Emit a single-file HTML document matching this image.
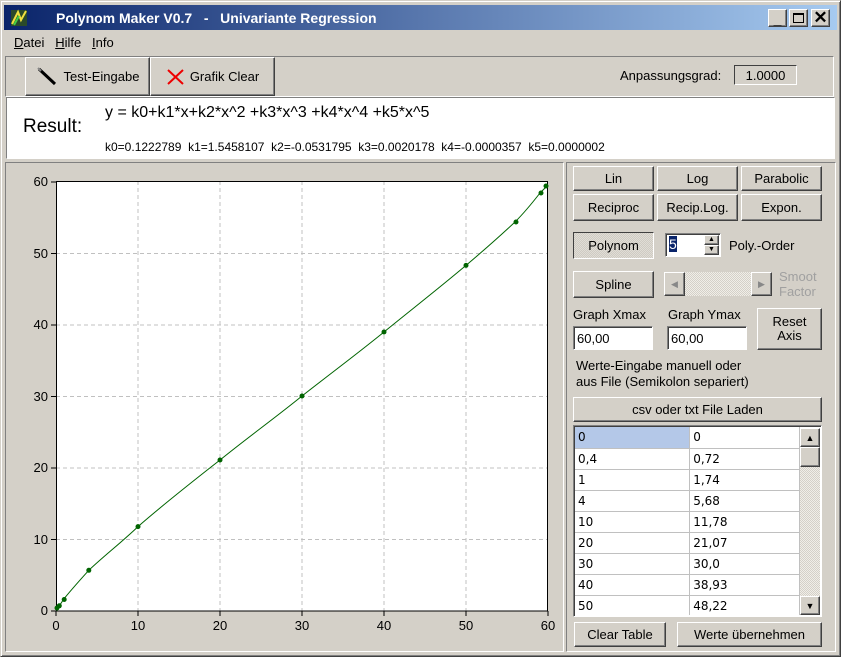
<!DOCTYPE html>
<html><head><meta charset="utf-8"><style>
*{margin:0;padding:0;box-sizing:border-box}
body{width:841px;height:657px;background:#d4d0c8;font-family:"Liberation Sans",sans-serif;font-size:12px;position:relative;overflow:hidden;color:#000}
.a{position:absolute}
.btn{position:absolute;background:#d4d0c8;border:1px solid;border-color:#fff #404040 #404040 #fff;box-shadow:inset -1px -1px 0 #808080;display:flex;align-items:center;justify-content:center;font-size:13px;text-align:center;line-height:14px}
.sunk{position:absolute;border:1px solid;border-color:#808080 #fff #fff #808080;box-shadow:inset 1px 1px 0 #404040}
.inp{position:absolute;background:#fff;border:1px solid;border-color:#808080 #fff #fff #808080;box-shadow:inset 1px 1px 0 #404040;font-size:13px;padding:4px 3px}
.tw{position:absolute;left:575px;top:427px;width:225px;height:188px;overflow:hidden;background:#fff}
table{border-collapse:collapse}
td{height:21px;border-right:1px solid #c0c0c0;border-bottom:1px solid #c0c0c0;background:#fff;font-family:"DejaVu Sans",sans-serif;font-size:12px;padding-left:3px;line-height:20px}
td.c1{width:115px}td.c2{width:110px}
</style></head><body>
<div class="a" style="left:0;top:0;width:841px;height:657px;border:1px solid;border-color:#d4d0c8 #404040 #404040 #d4d0c8;box-shadow:inset 1px 1px 0 #fff,inset -1px -1px 0 #808080"></div>
<div class="a" style="left:4px;top:5px;width:833px;height:25px;background:linear-gradient(to right,#0a246a,#a6caf0)"></div>
<svg class="a" style="left:9px;top:8px" width="20" height="20"><rect x="2" y="2" width="16" height="16" fill="#2a4a2a"/><path d="M3 16 L9 4 L12 12 L17 3" stroke="#f0e040" stroke-width="2" fill="none"/><path d="M5 17 L10 8" stroke="#4c4" stroke-width="2"/></svg>
<div class="a" style="left:56px;top:10px;color:#fff;font-weight:bold;font-size:14px">Polynom Maker V0.7 &nbsp; - &nbsp; Univariante Regression</div>
<div class="btn" style="left:768px;top:9px;width:19px;height:18px;font-weight:bold;font-size:14px;align-items:flex-end">_</div>
<div class="btn" style="left:789px;top:9px;width:19px;height:18px"><div style="width:11px;height:10px;border:1px solid #000;border-top-width:2px"></div></div>
<div class="btn" style="left:811px;top:9px;width:19px;height:18px;font-size:17px;font-weight:bold">✕</div>
<div class="a" style="left:14px;top:35px;font-size:13px"><u>D</u>atei &nbsp; <u>H</u>ilfe &nbsp; <u>I</u>nfo</div>
<div class="a" style="left:5px;top:56px;width:829px;height:41px;border:1px solid;border-color:#808080 #fff #fff #808080"></div>
<div class="btn" style="left:25px;top:57px;width:125px;height:39px"><svg width="24" height="20" style="margin-right:4px"><path d="M3 2 L19 17" stroke="#000" stroke-width="3"/><path d="M2 1 L5 4" stroke="#888" stroke-width="2"/></svg>Test-Eingabe</div>
<div class="btn" style="left:150px;top:57px;width:125px;height:39px"><svg width="20" height="18" style="margin-right:4px"><path d="M2 2 L17 16 M17 2 L2 16" stroke="#e00" stroke-width="2"/></svg>Grafik Clear</div>
<div class="a" style="left:620px;top:68px;font-size:13px">Anpassungsgrad:</div>
<div class="a" style="left:734px;top:65px;width:63px;height:20px;background:#d4d0c8;border:1px solid;border-color:#404040 #fff #fff #404040;font-size:13px;text-align:center;padding-top:2px">1.0000</div>
<div class="a" style="left:6px;top:97px;width:829px;height:62px;background:#fff;border:1px solid;border-color:#808080 #fff #fff #808080"></div>
<div class="a" style="left:23px;top:116px;font-size:19px">Result:</div>
<div class="a" style="left:105px;top:104px;font-size:16px">y = k0+k1*x+k2*x^2 +k3*x^3 +k4*x^4 +k5*x^5</div>
<div class="a" style="left:105px;top:140px;font-size:12px">k0=0.1222789&nbsp; k1=1.5458107&nbsp; k2=-0.0531795&nbsp; k3=0.0020178&nbsp; k4=-0.0000357&nbsp; k5=0.0000002</div>
<div class="a" style="left:5px;top:162px;width:559px;height:490px;border:1px solid;border-color:#808080 #fff #fff #808080"></div>
<div class="a" style="left:566px;top:162px;width:270px;height:490px;border:1px solid;border-color:#808080 #fff #fff #808080"></div>
<svg class="a" style="left:0;top:0" width="565" height="657" font-family="Liberation Sans" font-size="13">
<rect x="56" y="181" width="492" height="430" fill="#fff"/>
<g stroke="#c0c0c0" stroke-dasharray="4,3">
<line x1="138" y1="181" x2="138" y2="611"/><line x1="220" y1="181" x2="220" y2="611"/><line x1="302" y1="181" x2="302" y2="611"/><line x1="384" y1="181" x2="384" y2="611"/><line x1="466" y1="181" x2="466" y2="611"/>
<line x1="56" y1="539.5" x2="548" y2="539.5"/><line x1="56" y1="468" x2="548" y2="468"/><line x1="56" y1="396.5" x2="548" y2="396.5"/><line x1="56" y1="325" x2="548" y2="325"/><line x1="56" y1="253.5" x2="548" y2="253.5"/>
</g>
<rect x="56.5" y="181.5" width="491" height="429.5" fill="none" stroke="#000"/>
<g stroke="#000"><line x1="51" y1="182" x2="56" y2="182"/><line x1="51" y1="253.5" x2="56" y2="253.5"/><line x1="51" y1="325" x2="56" y2="325"/><line x1="51" y1="396.5" x2="56" y2="396.5"/><line x1="51" y1="468" x2="56" y2="468"/><line x1="51" y1="539.5" x2="56" y2="539.5"/><line x1="51" y1="611" x2="56" y2="611"/>
<line x1="56" y1="611" x2="56" y2="616"/><line x1="138" y1="611" x2="138" y2="616"/><line x1="220" y1="611" x2="220" y2="616"/><line x1="302" y1="611" x2="302" y2="616"/><line x1="384" y1="611" x2="384" y2="616"/><line x1="466" y1="611" x2="466" y2="616"/><line x1="548" y1="611" x2="548" y2="616"/></g>
<g text-anchor="end"><text x="48" y="186">60</text><text x="48" y="258">50</text><text x="48" y="329">40</text><text x="48" y="401">30</text><text x="48" y="472">20</text><text x="48" y="544">10</text><text x="48" y="615">0</text></g>
<g text-anchor="middle"><text x="56" y="630">0</text><text x="138" y="630">10</text><text x="220" y="630">20</text><text x="302" y="630">30</text><text x="384" y="630">40</text><text x="466" y="630">50</text><text x="548" y="630">60</text></g>
<path d="M56 610 L59.3 605.8 L64.2 598.5 C72 589 80 580 88.8 570.3 C105 555 122 542 138 526.6 C165 503 192 482 220 460 C247 438 275 418 302 396 C330 374 357 354 384 332 C411 310 438 289 466 265.4 C483 251 499 237 515 222 C525 212 533 202 540 193 L548 185" fill="none" stroke="#006400"/>
<g fill="#006400"><circle cx="57" cy="608" r="2.5"/><circle cx="59.3" cy="605.8" r="2.5"/><circle cx="64.2" cy="599.5" r="2.5"/><circle cx="88.8" cy="570.3" r="2.5"/><circle cx="138" cy="526.6" r="2.5"/><circle cx="220" cy="460" r="2.5"/><circle cx="302" cy="396" r="2.5"/><circle cx="384" cy="332" r="2.5"/><circle cx="466" cy="265.4" r="2.5"/><circle cx="516" cy="222" r="2.5"/><circle cx="541" cy="193" r="2.5"/><circle cx="546" cy="186" r="2.5"/></g>
</svg>
<div class="btn" style="left:573px;top:166px;width:81px;height:25px">Lin</div>
<div class="btn" style="left:657px;top:166px;width:81px;height:25px">Log</div>
<div class="btn" style="left:741px;top:166px;width:81px;height:25px">Parabolic</div>
<div class="btn" style="left:573px;top:194px;width:81px;height:27px">Reciproc</div>
<div class="btn" style="left:657px;top:194px;width:81px;height:27px">Recip.Log.</div>
<div class="btn" style="left:741px;top:194px;width:81px;height:27px">Expon.</div>
<div class="a" style="left:573px;top:232px;width:81px;height:27px;border:1px solid;border-color:#404040 #fff #fff #404040;background:repeating-conic-gradient(#e0ddd6 0 25%,#cfcbc3 0 50%) 0 0/2px 2px;display:flex;align-items:center;justify-content:center;font-size:13px">Polynom</div>
<div class="inp" style="left:665px;top:233px;width:56px;height:24px;padding:2px 3px"><span style="background:#0a246a;color:#fff;font-size:14px">5</span></div>
<div class="btn" style="left:704px;top:235px;width:15px;height:10px;font-size:7px">▲</div>
<div class="btn" style="left:704px;top:245px;width:15px;height:10px;font-size:7px">▼</div>
<div class="a" style="left:729px;top:238px;font-size:13px">Poly.-Order</div>
<div class="btn" style="left:573px;top:271px;width:81px;height:27px">Spline</div>
<div class="a" style="left:664px;top:272px;width:108px;height:24px;background:repeating-conic-gradient(#f0eee8 0 25%,#d4d0c8 0 50%) 0 0/2px 2px"></div>
<div class="btn" style="left:664px;top:272px;width:21px;height:24px;color:#888;font-size:9px">◀</div>
<div class="btn" style="left:751px;top:272px;width:21px;height:24px;color:#888;font-size:9px">▶</div>
<div class="a" style="left:779px;top:269px;color:#a0a0a0;font-size:13px;line-height:15px">Smoot<br>Factor</div>
<div class="a" style="left:573px;top:307px;font-size:13px">Graph Xmax</div>
<div class="a" style="left:668px;top:307px;font-size:13px">Graph Ymax</div>
<div class="inp" style="left:573px;top:326px;width:80px;height:24px">60,00</div>
<div class="inp" style="left:667px;top:326px;width:80px;height:24px">60,00</div>
<div class="btn" style="left:757px;top:308px;width:65px;height:42px">Reset<br>Axis</div>
<div class="a" style="left:576px;top:358px;font-size:13px;line-height:16px">Werte-Eingabe manuell oder<br>aus File (Semikolon separiert)</div>
<div class="btn" style="left:573px;top:397px;width:249px;height:25px">csv oder txt File Laden</div>
<div class="sunk" style="left:573px;top:425px;width:249px;height:192px;background:#fff"></div>
<div class="tw"><table>
<tr><td class="c1" style="background:#b4c8e8">0</td><td class="c2">0</td></tr>
<tr><td class="c1">0,4</td><td class="c2">0,72</td></tr>
<tr><td class="c1">1</td><td class="c2">1,74</td></tr>
<tr><td class="c1">4</td><td class="c2">5,68</td></tr>
<tr><td class="c1">10</td><td class="c2">11,78</td></tr>
<tr><td class="c1">20</td><td class="c2">21,07</td></tr>
<tr><td class="c1">30</td><td class="c2">30,0</td></tr>
<tr><td class="c1">40</td><td class="c2">38,93</td></tr>
<tr><td class="c1">50</td><td class="c2">48,22</td></tr>
</table></div>
<div class="a" style="left:800px;top:428px;width:20px;height:187px;background:repeating-conic-gradient(#f0eee8 0 25%,#d4d0c8 0 50%) 0 0/2px 2px"></div>
<div class="btn" style="left:800px;top:428px;width:20px;height:19px;font-size:9px">▲</div>
<div class="btn" style="left:800px;top:447px;width:20px;height:20px"></div>
<div class="btn" style="left:800px;top:596px;width:20px;height:19px;font-size:9px">▼</div>
<div class="btn" style="left:574px;top:622px;width:92px;height:25px">Clear Table</div>
<div class="btn" style="left:677px;top:622px;width:145px;height:25px">Werte übernehmen</div>
</body></html>
